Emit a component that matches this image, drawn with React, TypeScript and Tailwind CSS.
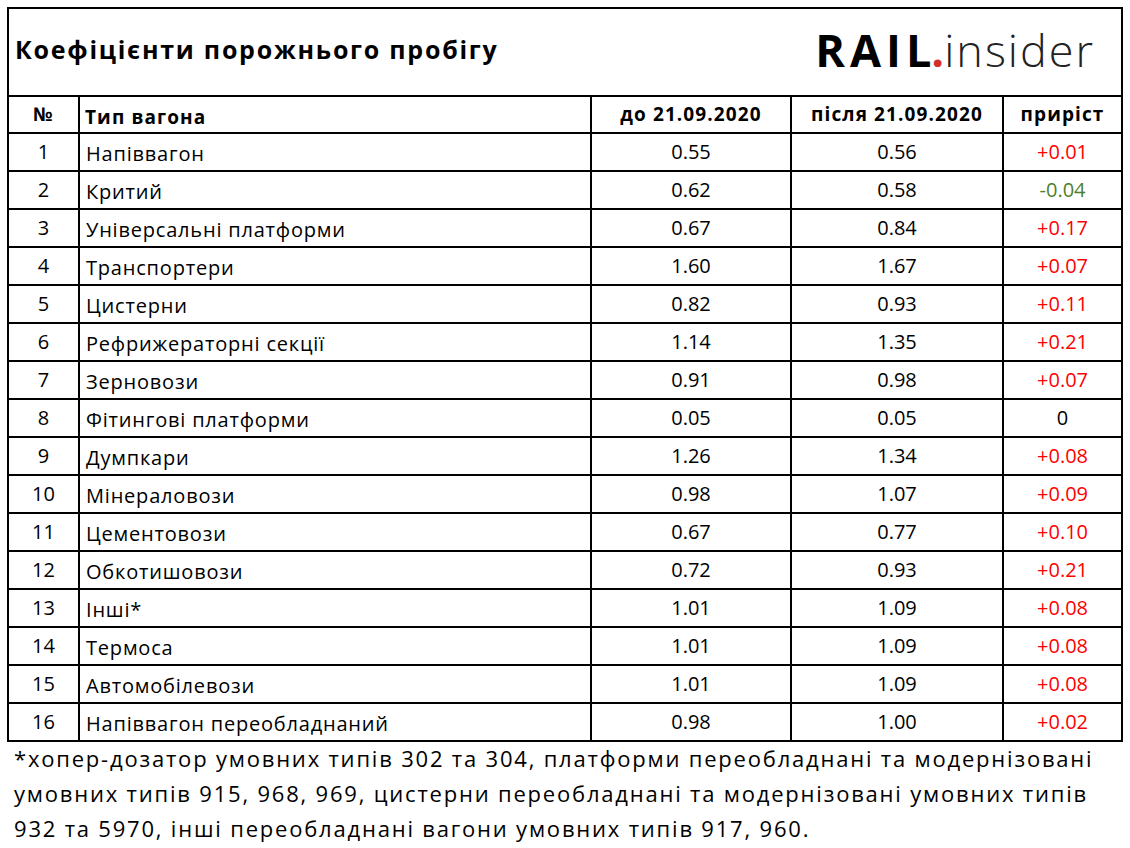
import React from "react";

const rows = [
  ["1", "Напіввагон", "0.55", "0.56", "+0.01"],
  ["2", "Критий", "0.62", "0.58", "-0.04"],
  ["3", "Універсальні платформи", "0.67", "0.84", "+0.17"],
  ["4", "Транспортери", "1.60", "1.67", "+0.07"],
  ["5", "Цистерни", "0.82", "0.93", "+0.11"],
  ["6", "Рефрижераторні секції", "1.14", "1.35", "+0.21"],
  ["7", "Зерновози", "0.91", "0.98", "+0.07"],
  ["8", "Фітингові платформи", "0.05", "0.05", "0"],
  ["9", "Думпкари", "1.26", "1.34", "+0.08"],
  ["10", "Мінераловози", "0.98", "1.07", "+0.09"],
  ["11", "Цементовози", "0.67", "0.77", "+0.10"],
  ["12", "Обкотишовози", "0.72", "0.93", "+0.21"],
  ["13", "Інші*", "1.01", "1.09", "+0.08"],
  ["14", "Термоса", "1.01", "1.09", "+0.08"],
  ["15", "Автомобілевози", "1.01", "1.09", "+0.08"],
  ["16", "Напіввагон переобладнаний", "0.98", "1.00", "+0.02"],
];

const deltaColor = (v: string) => {
  if (v.startsWith("+")) return "text-[#ff0000]";
  if (v.startsWith("-")) return "text-[#4e7f2c]";
  return "text-black";
};

const App = () => {
  return (
    <div className="w-[1130px] h-[848px] bg-white text-black font-['Open_Sans',sans-serif] pt-[7px] pl-[7px]">
      <table className="border-collapse w-[1114px] table-fixed">
        <colgroup>
          <col className="w-[71px]" />
          <col className="w-[512px]" />
          <col className="w-[200px]" />
          <col className="w-[212px]" />
          <col className="w-[119px]" />
        </colgroup>
        <thead>
          <tr className="h-[88px]">
            <td colSpan={5} className="border-2 border-black px-[6px]">
              <div className="flex items-center justify-between">
                <h1 className="text-[25px] font-bold tracking-[1.75px] pb-[4px]">Коефіцієнти порожнього пробігу</h1>
                <div className="flex items-baseline mr-[20px] mb-[6px] leading-none text-[45px]">
                  <span className="font-bold tracking-[5px]">RAI</span>
                  <span className="font-bold">L</span>
                  <span className="font-bold text-[#d32f2f]">.</span>
                  <span className="font-light tracking-[2px] text-[#222]">insider</span>
                </div>
              </div>
            </td>
          </tr>
          <tr className="h-[37px] text-[19px] font-bold tracking-[1.1px]">
            <th className="border-2 border-black">№</th>
            <th className="border-2 border-black text-left px-[5px] pt-[6px]">Тип вагона</th>
            <th className="border-2 border-black">до 21.09.2020</th>
            <th className="border-2 border-black">після 21.09.2020</th>
            <th className="border-2 border-black">приріст</th>
          </tr>
        </thead>
        <tbody className="text-[20px]">
          {rows.map((r) => (
            <tr key={r[0]} className="h-[38px]">
              <td className="border-2 border-black text-center">{r[0]}</td>
              <td className="border-2 border-black px-[6px] pt-[3px] tracking-[0.8px]">{r[1]}</td>
              <td className="border-2 border-black text-center">{r[2]}</td>
              <td className="border-2 border-black text-center">{r[3]}</td>
              <td className={"border-2 border-black text-center " + deltaColor(r[4])}>{r[4]}</td>
            </tr>
          ))}
        </tbody>
      </table>
      <p className="text-[22px] leading-[35px] pl-[7px] tracking-[1.8px] whitespace-nowrap mt-[-1px]">
        *хопер-дозатор умовних типів 302 та 304, платформи переобладнані та модернізовані
        <br />
        умовних типів 915, 968, 969, цистерни переобладнані та модернізовані умовних типів
        <br />
        932 та 5970, інші переобладнані вагони умовних типів 917, 960.
      </p>
    </div>
  );
};

export default App;
